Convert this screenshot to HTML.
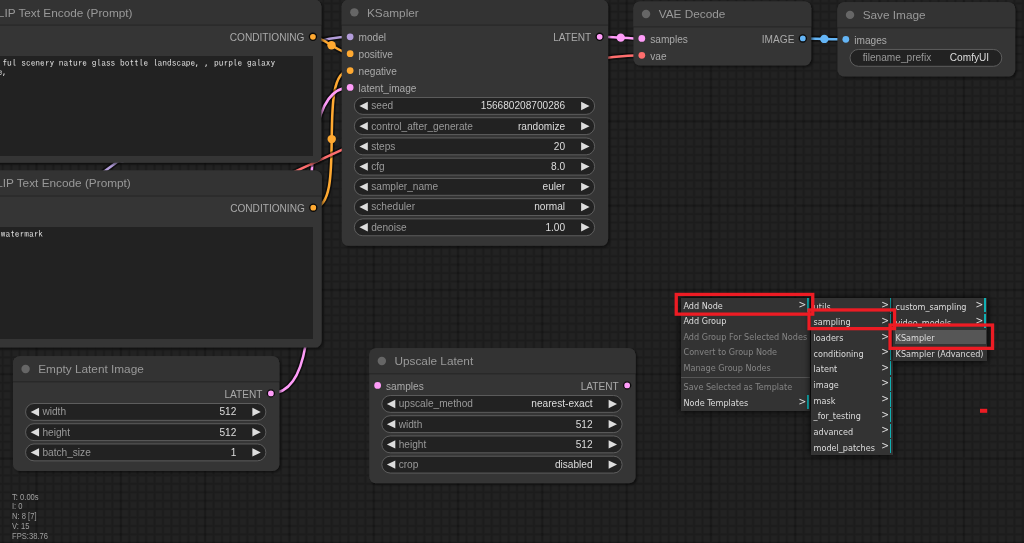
<!DOCTYPE html>
<html><head><meta charset="utf-8"><title>ComfyUI</title>
<style>
html,body{margin:0;padding:0;background:#222;overflow:hidden}
#root{will-change:transform;position:relative;width:1024px;height:543px;overflow:hidden;background:#222;font-family:"Liberation Sans",sans-serif}
.ta{position:absolute;background:#222;overflow:hidden;box-sizing:border-box}
.tt{position:absolute;left:1.7px;top:2.0px;width:333px;font-family:IPAGothic,'Liberation Mono',monospace;font-size:9.42px;letter-spacing:0px;line-height:9.1px;color:#ddd;white-space:pre-wrap;word-break:normal}
.inf{position:absolute;left:11.8px;font-size:8.5px;line-height:10px;color:#a0a0a0;white-space:pre;transform:scaleX(0.895);transform-origin:0 0}
.menu{position:absolute;background:#333;box-shadow:0 0 7px #000;box-sizing:border-box;font-family:"DejaVu Sans Condensed","Liberation Sans",sans-serif;font-size:9px;color:#ddd}
.me{position:relative;white-space:nowrap;padding-left:2.2px;box-sizing:border-box}
.me.dis{color:#858585}
.me.sel{}
.me.sel::before{content:"";position:absolute;left:1.6px;right:1.4px;top:1.2px;bottom:1.2px;background:#565656}
.me span{position:relative;top:var(--to)}
.me i{position:absolute;right:3.7px;top:-0.8px;font-style:normal;font-size:10.3px}
.me b{position:absolute;right:1.3px;top:0.4px;bottom:1.1px;width:1.9px;background:#10b0b4}
.sep{height:4px;position:relative}
.sep::after{content:"";position:absolute;left:0;right:0;top:1.6px;height:1px;background:#555}
.rb{position:absolute;border-style:solid;border-color:#ed1c24}
</style></head><body><div id="root">
<svg width="1024" height="543" viewBox="0 0 1024 543" style="position:absolute;left:0;top:0">
<defs><filter id="sh" x="-10%" y="-10%" width="125%" height="125%"><feDropShadow dx="2" dy="2" stdDeviation="1.5" flood-color="#000" flood-opacity="0.5"/></filter></defs>
<g transform="translate(-385.8,-131.8) scale(0.843)">
<g><path d="M441.0,140 V810 M451.0,140 V810 M461.0,140 V810 M471.0,140 V810 M481.0,140 V810 M491.0,140 V810 M511.0,140 V810 M521.0,140 V810 M531.0,140 V810 M541.0,140 V810 M551.0,140 V810 M561.0,140 V810 M571.0,140 V810 M581.0,140 V810 M591.0,140 V810 M611.0,140 V810 M621.0,140 V810 M631.0,140 V810 M641.0,140 V810 M651.0,140 V810 M661.0,140 V810 M671.0,140 V810 M681.0,140 V810 M691.0,140 V810 M711.0,140 V810 M721.0,140 V810 M731.0,140 V810 M741.0,140 V810 M751.0,140 V810 M761.0,140 V810 M771.0,140 V810 M781.0,140 V810 M791.0,140 V810 M811.0,140 V810 M821.0,140 V810 M831.0,140 V810 M841.0,140 V810 M851.0,140 V810 M861.0,140 V810 M871.0,140 V810 M881.0,140 V810 M891.0,140 V810 M911.0,140 V810 M921.0,140 V810 M931.0,140 V810 M941.0,140 V810 M951.0,140 V810 M961.0,140 V810 M971.0,140 V810 M981.0,140 V810 M991.0,140 V810 M1011.0,140 V810 M1021.0,140 V810 M1031.0,140 V810 M1041.0,140 V810 M1051.0,140 V810 M1061.0,140 V810 M1071.0,140 V810 M1081.0,140 V810 M1091.0,140 V810 M1111.0,140 V810 M1121.0,140 V810 M1131.0,140 V810 M1141.0,140 V810 M1151.0,140 V810 M1161.0,140 V810 M1171.0,140 V810 M1181.0,140 V810 M1191.0,140 V810 M1211.0,140 V810 M1221.0,140 V810 M1231.0,140 V810 M1241.0,140 V810 M1251.0,140 V810 M1261.0,140 V810 M1271.0,140 V810 M1281.0,140 V810 M1291.0,140 V810 M1311.0,140 V810 M1321.0,140 V810 M1331.0,140 V810 M1341.0,140 V810 M1351.0,140 V810 M1361.0,140 V810 M1371.0,140 V810 M1381.0,140 V810 M1391.0,140 V810 M1411.0,140 V810 M1421.0,140 V810 M1431.0,140 V810 M1441.0,140 V810 M1451.0,140 V810 M1461.0,140 V810 M1471.0,140 V810 M1481.0,140 V810 M1491.0,140 V810 M1511.0,140 V810 M1521.0,140 V810 M1531.0,140 V810 M1541.0,140 V810 M1551.0,140 V810 M1561.0,140 V810 M1571.0,140 V810 M1581.0,140 V810 M1591.0,140 V810 M1611.0,140 V810 M1621.0,140 V810 M1631.0,140 V810 M1641.0,140 V810 M1651.0,140 V810 M1661.0,140 V810 M1671.0,140 V810 M1681.0,140 V810 M440,140.3 H1682 M440,150.3 H1682 M440,160.3 H1682 M440,170.3 H1682 M440,180.3 H1682 M440,190.3 H1682 M440,210.3 H1682 M440,220.3 H1682 M440,230.3 H1682 M440,240.3 H1682 M440,250.3 H1682 M440,260.3 H1682 M440,270.3 H1682 M440,280.3 H1682 M440,290.3 H1682 M440,310.3 H1682 M440,320.3 H1682 M440,330.3 H1682 M440,340.3 H1682 M440,350.3 H1682 M440,360.3 H1682 M440,370.3 H1682 M440,380.3 H1682 M440,390.3 H1682 M440,410.3 H1682 M440,420.3 H1682 M440,430.3 H1682 M440,440.3 H1682 M440,450.3 H1682 M440,460.3 H1682 M440,470.3 H1682 M440,480.3 H1682 M440,490.3 H1682 M440,510.3 H1682 M440,520.3 H1682 M440,530.3 H1682 M440,540.3 H1682 M440,550.3 H1682 M440,560.3 H1682 M440,570.3 H1682 M440,580.3 H1682 M440,590.3 H1682 M440,610.3 H1682 M440,620.3 H1682 M440,630.3 H1682 M440,640.3 H1682 M440,650.3 H1682 M440,660.3 H1682 M440,670.3 H1682 M440,680.3 H1682 M440,690.3 H1682 M440,710.3 H1682 M440,720.3 H1682 M440,730.3 H1682 M440,740.3 H1682 M440,750.3 H1682 M440,760.3 H1682 M440,770.3 H1682 M440,780.3 H1682 M440,790.3 H1682" stroke="#000" stroke-opacity="0.06" stroke-width="3.5" fill="none"/><path d="M441.0,140 V810 M451.0,140 V810 M461.0,140 V810 M471.0,140 V810 M481.0,140 V810 M491.0,140 V810 M511.0,140 V810 M521.0,140 V810 M531.0,140 V810 M541.0,140 V810 M551.0,140 V810 M561.0,140 V810 M571.0,140 V810 M581.0,140 V810 M591.0,140 V810 M611.0,140 V810 M621.0,140 V810 M631.0,140 V810 M641.0,140 V810 M651.0,140 V810 M661.0,140 V810 M671.0,140 V810 M681.0,140 V810 M691.0,140 V810 M711.0,140 V810 M721.0,140 V810 M731.0,140 V810 M741.0,140 V810 M751.0,140 V810 M761.0,140 V810 M771.0,140 V810 M781.0,140 V810 M791.0,140 V810 M811.0,140 V810 M821.0,140 V810 M831.0,140 V810 M841.0,140 V810 M851.0,140 V810 M861.0,140 V810 M871.0,140 V810 M881.0,140 V810 M891.0,140 V810 M911.0,140 V810 M921.0,140 V810 M931.0,140 V810 M941.0,140 V810 M951.0,140 V810 M961.0,140 V810 M971.0,140 V810 M981.0,140 V810 M991.0,140 V810 M1011.0,140 V810 M1021.0,140 V810 M1031.0,140 V810 M1041.0,140 V810 M1051.0,140 V810 M1061.0,140 V810 M1071.0,140 V810 M1081.0,140 V810 M1091.0,140 V810 M1111.0,140 V810 M1121.0,140 V810 M1131.0,140 V810 M1141.0,140 V810 M1151.0,140 V810 M1161.0,140 V810 M1171.0,140 V810 M1181.0,140 V810 M1191.0,140 V810 M1211.0,140 V810 M1221.0,140 V810 M1231.0,140 V810 M1241.0,140 V810 M1251.0,140 V810 M1261.0,140 V810 M1271.0,140 V810 M1281.0,140 V810 M1291.0,140 V810 M1311.0,140 V810 M1321.0,140 V810 M1331.0,140 V810 M1341.0,140 V810 M1351.0,140 V810 M1361.0,140 V810 M1371.0,140 V810 M1381.0,140 V810 M1391.0,140 V810 M1411.0,140 V810 M1421.0,140 V810 M1431.0,140 V810 M1441.0,140 V810 M1451.0,140 V810 M1461.0,140 V810 M1471.0,140 V810 M1481.0,140 V810 M1491.0,140 V810 M1511.0,140 V810 M1521.0,140 V810 M1531.0,140 V810 M1541.0,140 V810 M1551.0,140 V810 M1561.0,140 V810 M1571.0,140 V810 M1581.0,140 V810 M1591.0,140 V810 M1611.0,140 V810 M1621.0,140 V810 M1631.0,140 V810 M1641.0,140 V810 M1651.0,140 V810 M1661.0,140 V810 M1671.0,140 V810 M1681.0,140 V810 M440,140.3 H1682 M440,150.3 H1682 M440,160.3 H1682 M440,170.3 H1682 M440,180.3 H1682 M440,190.3 H1682 M440,210.3 H1682 M440,220.3 H1682 M440,230.3 H1682 M440,240.3 H1682 M440,250.3 H1682 M440,260.3 H1682 M440,270.3 H1682 M440,280.3 H1682 M440,290.3 H1682 M440,310.3 H1682 M440,320.3 H1682 M440,330.3 H1682 M440,340.3 H1682 M440,350.3 H1682 M440,360.3 H1682 M440,370.3 H1682 M440,380.3 H1682 M440,390.3 H1682 M440,410.3 H1682 M440,420.3 H1682 M440,430.3 H1682 M440,440.3 H1682 M440,450.3 H1682 M440,460.3 H1682 M440,470.3 H1682 M440,480.3 H1682 M440,490.3 H1682 M440,510.3 H1682 M440,520.3 H1682 M440,530.3 H1682 M440,540.3 H1682 M440,550.3 H1682 M440,560.3 H1682 M440,570.3 H1682 M440,580.3 H1682 M440,590.3 H1682 M440,610.3 H1682 M440,620.3 H1682 M440,630.3 H1682 M440,640.3 H1682 M440,650.3 H1682 M440,660.3 H1682 M440,670.3 H1682 M440,680.3 H1682 M440,690.3 H1682 M440,710.3 H1682 M440,720.3 H1682 M440,730.3 H1682 M440,740.3 H1682 M440,750.3 H1682 M440,760.3 H1682 M440,770.3 H1682 M440,780.3 H1682 M440,790.3 H1682" stroke="#000" stroke-opacity="0.10" stroke-width="1.9" fill="none"/><path d="M501.0,140 V810 M601.0,140 V810 M701.0,140 V810 M801.0,140 V810 M901.0,140 V810 M1001.0,140 V810 M1101.0,140 V810 M1201.0,140 V810 M1301.0,140 V810 M1401.0,140 V810 M1501.0,140 V810 M1601.0,140 V810 M440,200.3 H1682 M440,300.3 H1682 M440,400.3 H1682 M440,500.3 H1682 M440,600.3 H1682 M440,700.3 H1682 M440,800.3 H1682" stroke="#000" stroke-opacity="0.07" stroke-width="3.6" fill="none"/><path d="M501.0,140 V810 M601.0,140 V810 M701.0,140 V810 M801.0,140 V810 M901.0,140 V810 M1001.0,140 V810 M1101.0,140 V810 M1201.0,140 V810 M1301.0,140 V810 M1401.0,140 V810 M1501.0,140 V810 M1601.0,140 V810 M440,200.3 H1682 M440,300.3 H1682 M440,400.3 H1682 M440,500.3 H1682 M440,600.3 H1682 M440,700.3 H1682 M440,800.3 H1682" stroke="#000" stroke-opacity="0.15" stroke-width="2.0" fill="none"/></g>
<path d="M332.00,488.00 C485.22,488.00 719.78,200.00 873.00,200.00" fill="none" stroke="rgba(0,0,0,0.5)" stroke-width="7"/>
<path d="M332.00,488.00 C485.22,488.00 719.78,200.00 873.00,200.00" fill="none" stroke="#B39DDB" stroke-width="3"/>
<circle cx="602.50" cy="344.00" r="5" fill="#B39DDB"/>
<path d="M828.85,200.00 C840.97,200.00 860.88,220.00 873.00,220.00" fill="none" stroke="rgba(0,0,0,0.5)" stroke-width="7"/>
<path d="M828.85,200.00 C840.97,200.00 860.88,220.00 873.00,220.00" fill="none" stroke="#FFA931" stroke-width="3"/>
<circle cx="850.92" cy="210.00" r="5" fill="#FFA931"/>
<path d="M829.28,402.70 C871.40,402.70 830.88,240.00 873.00,240.00" fill="none" stroke="rgba(0,0,0,0.5)" stroke-width="7"/>
<path d="M829.28,402.70 C871.40,402.70 830.88,240.00 873.00,240.00" fill="none" stroke="#FFA931" stroke-width="3"/>
<circle cx="851.14" cy="321.35" r="5" fill="#FFA931"/>
<path d="M779.00,623.00 C872.74,623.00 779.26,260.00 873.00,260.00" fill="none" stroke="rgba(0,0,0,0.5)" stroke-width="7"/>
<path d="M779.00,623.00 C872.74,623.00 779.26,260.00 873.00,260.00" fill="none" stroke="#FF9CF9" stroke-width="3"/>
<circle cx="826.00" cy="441.50" r="5" fill="#FF9CF9"/>
<path d="M1169.00,200.00 C1181.51,200.00 1206.49,202.00 1219.00,202.00" fill="none" stroke="rgba(0,0,0,0.5)" stroke-width="7"/>
<path d="M1169.00,200.00 C1181.51,200.00 1206.49,202.00 1219.00,202.00" fill="none" stroke="#FF9CF9" stroke-width="3"/>
<circle cx="1194.00" cy="201.00" r="5" fill="#FF9CF9"/>
<path d="M332.00,528.00 C566.57,528.00 984.43,222.00 1219.00,222.00" fill="none" stroke="rgba(0,0,0,0.5)" stroke-width="7"/>
<path d="M332.00,528.00 C566.57,528.00 984.43,222.00 1219.00,222.00" fill="none" stroke="#FF6E6E" stroke-width="3"/>
<circle cx="775.50" cy="375.00" r="5" fill="#FF6E6E"/>
<path d="M1410.00,202.00 C1422.75,202.00 1448.25,203.00 1461.00,203.00" fill="none" stroke="rgba(0,0,0,0.5)" stroke-width="7"/>
<path d="M1410.00,202.00 C1422.75,202.00 1448.25,203.00 1461.00,203.00" fill="none" stroke="#64B5F6" stroke-width="3"/>
<circle cx="1435.50" cy="202.50" r="5" fill="#64B5F6"/>
<g transform="translate(415,186)">
<rect x="0" y="-30" width="423.85" height="193.4" rx="8" fill="#353535" filter="url(#sh)"/>
<path d="M0,0 V-22 a8,8 0 0 1 8,-8 H415.85 a8,8 0 0 1 8,8 V0 Z" fill="#333"/>
<rect x="0" y="-0.7" width="423.85" height="1.9" fill="rgba(0,0,0,0.19)"/>
<circle cx="15" cy="-15" r="5" fill="#666"/>
<text x="30" y="-10" font-size="14" fill="#999" font-family="Liberation Sans, sans-serif">CLIP Text Encode (Prompt)</text>
<circle cx="10" cy="14.0" r="4" fill="#FFD500"/>
<text x="20" y="19.0" font-size="12" fill="#AAA" font-family="Liberation Sans, sans-serif">clip</text>
<circle cx="413.85" cy="14.0" r="4.2" fill="#FFA931" stroke="#0a0a0a" stroke-width="1.6"/>
<text x="403.85" y="19.0" font-size="12" fill="#AAA" text-anchor="end" font-family="Liberation Sans, sans-serif">CONDITIONING</text>
</g>
<g transform="translate(413,388.7)">
<rect x="0" y="-30" width="426.28" height="210.0" rx="8" fill="#353535" filter="url(#sh)"/>
<path d="M0,0 V-22 a8,8 0 0 1 8,-8 H418.28 a8,8 0 0 1 8,8 V0 Z" fill="#333"/>
<rect x="0" y="-0.7" width="426.28" height="1.9" fill="rgba(0,0,0,0.19)"/>
<circle cx="15" cy="-15" r="5" fill="#666"/>
<text x="30" y="-10" font-size="14" fill="#999" font-family="Liberation Sans, sans-serif">CLIP Text Encode (Prompt)</text>
<circle cx="10" cy="14.0" r="4" fill="#FFD500"/>
<text x="20" y="19.0" font-size="12" fill="#AAA" font-family="Liberation Sans, sans-serif">clip</text>
<circle cx="416.28" cy="14.0" r="4.2" fill="#FFA931" stroke="#0a0a0a" stroke-width="1.6"/>
<text x="406.28" y="19.0" font-size="12" fill="#AAA" text-anchor="end" font-family="Liberation Sans, sans-serif">CONDITIONING</text>
</g>
<g transform="translate(473,609)">
<rect x="0" y="-30" width="316" height="136" rx="8" fill="#353535" filter="url(#sh)"/>
<path d="M0,0 V-22 a8,8 0 0 1 8,-8 H308 a8,8 0 0 1 8,8 V0 Z" fill="#333"/>
<rect x="0" y="-0.7" width="316" height="1.9" fill="rgba(0,0,0,0.19)"/>
<circle cx="15" cy="-15" r="5" fill="#666"/>
<text x="30" y="-10" font-size="14" fill="#999" font-family="Liberation Sans, sans-serif">Empty Latent Image</text>
<circle cx="306" cy="14.0" r="4.2" fill="#FF9CF9" stroke="#0a0a0a" stroke-width="1.6"/>
<text x="296" y="19.0" font-size="12" fill="#AAA" text-anchor="end" font-family="Liberation Sans, sans-serif">LATENT</text>
<rect x="15" y="26.0" width="285" height="20" rx="10" fill="#222" stroke="#666" stroke-width="1"/>
<path d="M31,31.0 L21,36.0 L31,41.0 Z" fill="#DDD"/>
<path d="M284,31.0 L294,36.0 L284,41.0 Z" fill="#DDD"/>
<text x="35" y="40.0" font-size="12" fill="#999" font-family="Liberation Sans, sans-serif">width</text>
<text x="265" y="40.0" font-size="12" fill="#DDD" text-anchor="end" font-family="Liberation Sans, sans-serif">512</text>
<rect x="15" y="50.0" width="285" height="20" rx="10" fill="#222" stroke="#666" stroke-width="1"/>
<path d="M31,55.0 L21,60.0 L31,65.0 Z" fill="#DDD"/>
<path d="M284,55.0 L294,60.0 L284,65.0 Z" fill="#DDD"/>
<text x="35" y="64.0" font-size="12" fill="#999" font-family="Liberation Sans, sans-serif">height</text>
<text x="265" y="64.0" font-size="12" fill="#DDD" text-anchor="end" font-family="Liberation Sans, sans-serif">512</text>
<rect x="15" y="74.0" width="285" height="20" rx="10" fill="#222" stroke="#666" stroke-width="1"/>
<path d="M31,79.0 L21,84.0 L31,89.0 Z" fill="#DDD"/>
<path d="M284,79.0 L294,84.0 L284,89.0 Z" fill="#DDD"/>
<text x="35" y="88.0" font-size="12" fill="#999" font-family="Liberation Sans, sans-serif">batch_size</text>
<text x="265" y="88.0" font-size="12" fill="#DDD" text-anchor="end" font-family="Liberation Sans, sans-serif">1</text>
</g>
<g transform="translate(863,186)">
<rect x="0" y="-30" width="316" height="292" rx="8" fill="#353535" filter="url(#sh)"/>
<path d="M0,0 V-22 a8,8 0 0 1 8,-8 H308 a8,8 0 0 1 8,8 V0 Z" fill="#333"/>
<rect x="0" y="-0.7" width="316" height="1.9" fill="rgba(0,0,0,0.19)"/>
<circle cx="15" cy="-15" r="5" fill="#666"/>
<text x="30" y="-10" font-size="14" fill="#999" font-family="Liberation Sans, sans-serif">KSampler</text>
<circle cx="10" cy="14.0" r="4" fill="#B39DDB"/>
<text x="20" y="19.0" font-size="12" fill="#AAA" font-family="Liberation Sans, sans-serif">model</text>
<circle cx="10" cy="34.0" r="4" fill="#FFA931"/>
<text x="20" y="39.0" font-size="12" fill="#AAA" font-family="Liberation Sans, sans-serif">positive</text>
<circle cx="10" cy="54.0" r="4" fill="#FFA931"/>
<text x="20" y="59.0" font-size="12" fill="#AAA" font-family="Liberation Sans, sans-serif">negative</text>
<circle cx="10" cy="74.0" r="4" fill="#FF9CF9"/>
<text x="20" y="79.0" font-size="12" fill="#AAA" font-family="Liberation Sans, sans-serif">latent_image</text>
<circle cx="306" cy="14.0" r="4.2" fill="#FF9CF9" stroke="#0a0a0a" stroke-width="1.6"/>
<text x="296" y="19.0" font-size="12" fill="#AAA" text-anchor="end" font-family="Liberation Sans, sans-serif">LATENT</text>
<rect x="15" y="86.0" width="285" height="20" rx="10" fill="#222" stroke="#666" stroke-width="1"/>
<path d="M31,91.0 L21,96.0 L31,101.0 Z" fill="#DDD"/>
<path d="M284,91.0 L294,96.0 L284,101.0 Z" fill="#DDD"/>
<text x="35" y="100.0" font-size="12" fill="#999" font-family="Liberation Sans, sans-serif">seed</text>
<text x="265" y="100.0" font-size="12" fill="#DDD" text-anchor="end" font-family="Liberation Sans, sans-serif">156680208700286</text>
<rect x="15" y="110.0" width="285" height="20" rx="10" fill="#222" stroke="#666" stroke-width="1"/>
<path d="M31,115.0 L21,120.0 L31,125.0 Z" fill="#DDD"/>
<path d="M284,115.0 L294,120.0 L284,125.0 Z" fill="#DDD"/>
<text x="35" y="124.0" font-size="12" fill="#999" font-family="Liberation Sans, sans-serif">control_after_generate</text>
<text x="265" y="124.0" font-size="12" fill="#DDD" text-anchor="end" font-family="Liberation Sans, sans-serif">randomize</text>
<rect x="15" y="134.0" width="285" height="20" rx="10" fill="#222" stroke="#666" stroke-width="1"/>
<path d="M31,139.0 L21,144.0 L31,149.0 Z" fill="#DDD"/>
<path d="M284,139.0 L294,144.0 L284,149.0 Z" fill="#DDD"/>
<text x="35" y="148.0" font-size="12" fill="#999" font-family="Liberation Sans, sans-serif">steps</text>
<text x="265" y="148.0" font-size="12" fill="#DDD" text-anchor="end" font-family="Liberation Sans, sans-serif">20</text>
<rect x="15" y="158.0" width="285" height="20" rx="10" fill="#222" stroke="#666" stroke-width="1"/>
<path d="M31,163.0 L21,168.0 L31,173.0 Z" fill="#DDD"/>
<path d="M284,163.0 L294,168.0 L284,173.0 Z" fill="#DDD"/>
<text x="35" y="172.0" font-size="12" fill="#999" font-family="Liberation Sans, sans-serif">cfg</text>
<text x="265" y="172.0" font-size="12" fill="#DDD" text-anchor="end" font-family="Liberation Sans, sans-serif">8.0</text>
<rect x="15" y="182.0" width="285" height="20" rx="10" fill="#222" stroke="#666" stroke-width="1"/>
<path d="M31,187.0 L21,192.0 L31,197.0 Z" fill="#DDD"/>
<path d="M284,187.0 L294,192.0 L284,197.0 Z" fill="#DDD"/>
<text x="35" y="196.0" font-size="12" fill="#999" font-family="Liberation Sans, sans-serif">sampler_name</text>
<text x="265" y="196.0" font-size="12" fill="#DDD" text-anchor="end" font-family="Liberation Sans, sans-serif">euler</text>
<rect x="15" y="206.0" width="285" height="20" rx="10" fill="#222" stroke="#666" stroke-width="1"/>
<path d="M31,211.0 L21,216.0 L31,221.0 Z" fill="#DDD"/>
<path d="M284,211.0 L294,216.0 L284,221.0 Z" fill="#DDD"/>
<text x="35" y="220.0" font-size="12" fill="#999" font-family="Liberation Sans, sans-serif">scheduler</text>
<text x="265" y="220.0" font-size="12" fill="#DDD" text-anchor="end" font-family="Liberation Sans, sans-serif">normal</text>
<rect x="15" y="230.0" width="285" height="20" rx="10" fill="#222" stroke="#666" stroke-width="1"/>
<path d="M31,235.0 L21,240.0 L31,245.0 Z" fill="#DDD"/>
<path d="M284,235.0 L294,240.0 L284,245.0 Z" fill="#DDD"/>
<text x="35" y="244.0" font-size="12" fill="#999" font-family="Liberation Sans, sans-serif">denoise</text>
<text x="265" y="244.0" font-size="12" fill="#DDD" text-anchor="end" font-family="Liberation Sans, sans-serif">1.00</text>
</g>
<g transform="translate(1209,188)">
<rect x="0" y="-30" width="211" height="76" rx="8" fill="#353535" filter="url(#sh)"/>
<path d="M0,0 V-22 a8,8 0 0 1 8,-8 H203 a8,8 0 0 1 8,8 V0 Z" fill="#333"/>
<rect x="0" y="-0.7" width="211" height="1.9" fill="rgba(0,0,0,0.19)"/>
<circle cx="15" cy="-15" r="5" fill="#666"/>
<text x="30" y="-10" font-size="14" fill="#999" font-family="Liberation Sans, sans-serif">VAE Decode</text>
<circle cx="10" cy="14.0" r="4" fill="#FF9CF9"/>
<text x="20" y="19.0" font-size="12" fill="#AAA" font-family="Liberation Sans, sans-serif">samples</text>
<circle cx="10" cy="34.0" r="4" fill="#FF6E6E"/>
<text x="20" y="39.0" font-size="12" fill="#AAA" font-family="Liberation Sans, sans-serif">vae</text>
<circle cx="201" cy="14.0" r="4.2" fill="#64B5F6" stroke="#0a0a0a" stroke-width="1.6"/>
<text x="191" y="19.0" font-size="12" fill="#AAA" text-anchor="end" font-family="Liberation Sans, sans-serif">IMAGE</text>
</g>
<g transform="translate(1451,189)">
<rect x="0" y="-30" width="211" height="88" rx="8" fill="#353535" filter="url(#sh)"/>
<path d="M0,0 V-22 a8,8 0 0 1 8,-8 H203 a8,8 0 0 1 8,8 V0 Z" fill="#333"/>
<rect x="0" y="-0.7" width="211" height="1.9" fill="rgba(0,0,0,0.19)"/>
<circle cx="15" cy="-15" r="5" fill="#666"/>
<text x="30" y="-10" font-size="14" fill="#999" font-family="Liberation Sans, sans-serif">Save Image</text>
<circle cx="10" cy="14.0" r="4" fill="#64B5F6"/>
<text x="20" y="19.0" font-size="12" fill="#AAA" font-family="Liberation Sans, sans-serif">images</text>
<rect x="15" y="26.0" width="180" height="20" rx="10" fill="#222" stroke="#666" stroke-width="1"/>
<text x="30" y="40.0" font-size="12" fill="#999" font-family="Liberation Sans, sans-serif">filename_prefix</text>
<text x="180" y="40.0" font-size="12" fill="#DDD" text-anchor="end" font-family="Liberation Sans, sans-serif">ComfyUI</text>
</g>
<g transform="translate(895.6,599.5)">
<rect x="0" y="-30" width="316" height="160" rx="8" fill="#353535" filter="url(#sh)"/>
<path d="M0,0 V-22 a8,8 0 0 1 8,-8 H308 a8,8 0 0 1 8,8 V0 Z" fill="#333"/>
<rect x="0" y="-0.7" width="316" height="1.9" fill="rgba(0,0,0,0.19)"/>
<circle cx="15" cy="-15" r="5" fill="#666"/>
<text x="30" y="-10" font-size="14" fill="#999" font-family="Liberation Sans, sans-serif">Upscale Latent</text>
<circle cx="10" cy="14.0" r="4" fill="#FF9CF9"/>
<text x="20" y="19.0" font-size="12" fill="#AAA" font-family="Liberation Sans, sans-serif">samples</text>
<circle cx="306" cy="14.0" r="4.2" fill="#FF9CF9" stroke="#0a0a0a" stroke-width="1.6"/>
<text x="296" y="19.0" font-size="12" fill="#AAA" text-anchor="end" font-family="Liberation Sans, sans-serif">LATENT</text>
<rect x="15" y="26.0" width="285" height="20" rx="10" fill="#222" stroke="#666" stroke-width="1"/>
<path d="M31,31.0 L21,36.0 L31,41.0 Z" fill="#DDD"/>
<path d="M284,31.0 L294,36.0 L284,41.0 Z" fill="#DDD"/>
<text x="35" y="40.0" font-size="12" fill="#999" font-family="Liberation Sans, sans-serif">upscale_method</text>
<text x="265" y="40.0" font-size="12" fill="#DDD" text-anchor="end" font-family="Liberation Sans, sans-serif">nearest-exact</text>
<rect x="15" y="50.0" width="285" height="20" rx="10" fill="#222" stroke="#666" stroke-width="1"/>
<path d="M31,55.0 L21,60.0 L31,65.0 Z" fill="#DDD"/>
<path d="M284,55.0 L294,60.0 L284,65.0 Z" fill="#DDD"/>
<text x="35" y="64.0" font-size="12" fill="#999" font-family="Liberation Sans, sans-serif">width</text>
<text x="265" y="64.0" font-size="12" fill="#DDD" text-anchor="end" font-family="Liberation Sans, sans-serif">512</text>
<rect x="15" y="74.0" width="285" height="20" rx="10" fill="#222" stroke="#666" stroke-width="1"/>
<path d="M31,79.0 L21,84.0 L31,89.0 Z" fill="#DDD"/>
<path d="M284,79.0 L294,84.0 L284,89.0 Z" fill="#DDD"/>
<text x="35" y="88.0" font-size="12" fill="#999" font-family="Liberation Sans, sans-serif">height</text>
<text x="265" y="88.0" font-size="12" fill="#DDD" text-anchor="end" font-family="Liberation Sans, sans-serif">512</text>
<rect x="15" y="98.0" width="285" height="20" rx="10" fill="#222" stroke="#666" stroke-width="1"/>
<path d="M31,103.0 L21,108.0 L31,113.0 Z" fill="#DDD"/>
<path d="M284,103.0 L294,108.0 L284,113.0 Z" fill="#DDD"/>
<text x="35" y="112.0" font-size="12" fill="#999" font-family="Liberation Sans, sans-serif">crop</text>
<text x="265" y="112.0" font-size="12" fill="#DDD" text-anchor="end" font-family="Liberation Sans, sans-serif">disabled</text>
</g>
</g>
</svg>

<div class="ta" style="left:-27.5px;top:56.3px;width:340.7px;height:99.5px"><div class="tt" style="clip-path:polygon(27.6px 0,100% 0,100% 100%,0 100%,0 9.1px,27.6px 9.1px)">beautiful scenery nature glass bottle landscape, , purple galaxy bottle,</div></div>
<div class="ta" style="left:-29.2px;top:226.7px;width:342.4px;height:112.8px"><div class="tt">text, watermark</div></div>

<div class="inf" style="top:491.60px">T: 0.00s</div><div class="inf" style="top:501.40px">I: 0</div><div class="inf" style="top:511.20px">N: 8 [7]</div><div class="inf" style="top:521.00px">V: 15</div><div class="inf" style="top:530.80px">FPS:38.76</div>
<div class="menu" style="left:681.3px;top:297.8px;width:128.7px;--to:1.15px;padding-bottom:0.8px"><div class="me " style="height:15.5px;line-height:15.5px"><span>Add Node</span><i>&gt;</i><b></b></div><div class="me " style="height:15.5px;line-height:15.5px"><span>Add Group</span></div><div class="me dis" style="height:15.5px;line-height:15.5px"><span>Add Group For Selected Nodes</span></div><div class="me dis" style="height:15.5px;line-height:15.5px"><span>Convert to Group Node</span></div><div class="me dis" style="height:15.5px;line-height:15.5px"><span>Manage Group Nodes</span></div><div class="sep"></div><div class="me dis" style="height:15.5px;line-height:15.5px"><span>Save Selected as Template</span></div><div class="me " style="height:15.5px;line-height:15.5px"><span>Node Templates</span><i>&gt;</i><b></b></div></div><div class="menu" style="left:811.4px;top:298.0px;width:81.3px;--to:1.6px;padding-bottom:0px"><div class="me " style="height:15.66px;line-height:15.66px"><span>utils</span><i>&gt;</i><b></b></div><div class="me " style="height:15.66px;line-height:15.66px"><span>sampling</span><i>&gt;</i><b></b></div><div class="me " style="height:15.66px;line-height:15.66px"><span>loaders</span><i>&gt;</i><b></b></div><div class="me " style="height:15.66px;line-height:15.66px"><span>conditioning</span><i>&gt;</i><b></b></div><div class="me " style="height:15.66px;line-height:15.66px"><span>latent</span><i>&gt;</i><b></b></div><div class="me " style="height:15.66px;line-height:15.66px"><span>image</span><i>&gt;</i><b></b></div><div class="me " style="height:15.66px;line-height:15.66px"><span>mask</span><i>&gt;</i><b></b></div><div class="me " style="height:15.66px;line-height:15.66px"><span>_for_testing</span><i>&gt;</i><b></b></div><div class="me " style="height:15.66px;line-height:15.66px"><span>advanced</span><i>&gt;</i><b></b></div><div class="me " style="height:15.66px;line-height:15.66px"><span>model_patches</span><i>&gt;</i><b></b></div></div><div class="menu" style="left:893.4px;top:297.8px;width:93.6px;--to:2.1px;padding-bottom:0px"><div class="me " style="height:15.7px;line-height:15.7px"><span>custom_sampling</span><i>&gt;</i><b></b></div><div class="me " style="height:15.7px;line-height:15.7px"><span>video_models</span><i>&gt;</i><b></b></div><div class="me sel" style="height:15.7px;line-height:15.7px"><span>KSampler</span></div><div class="me " style="height:15.7px;line-height:15.7px"><span>KSampler (Advanced)</span></div></div>
<svg width="1024" height="543" style="position:absolute;left:0;top:0"><rect x="676.25" y="294.45" width="136.50" height="19.70" fill="none" stroke="#ed1c24" stroke-width="3.3"/><rect x="809.05" y="309.95" width="85.50" height="18.70" fill="none" stroke="#ed1c24" stroke-width="3.3"/><rect x="890.05" y="325.05" width="102.50" height="23.30" fill="none" stroke="#ed1c24" stroke-width="3.3"/><rect x="980" y="408.8" width="7.2" height="4" fill="#ed1c24"/></svg>
</div></body></html>
